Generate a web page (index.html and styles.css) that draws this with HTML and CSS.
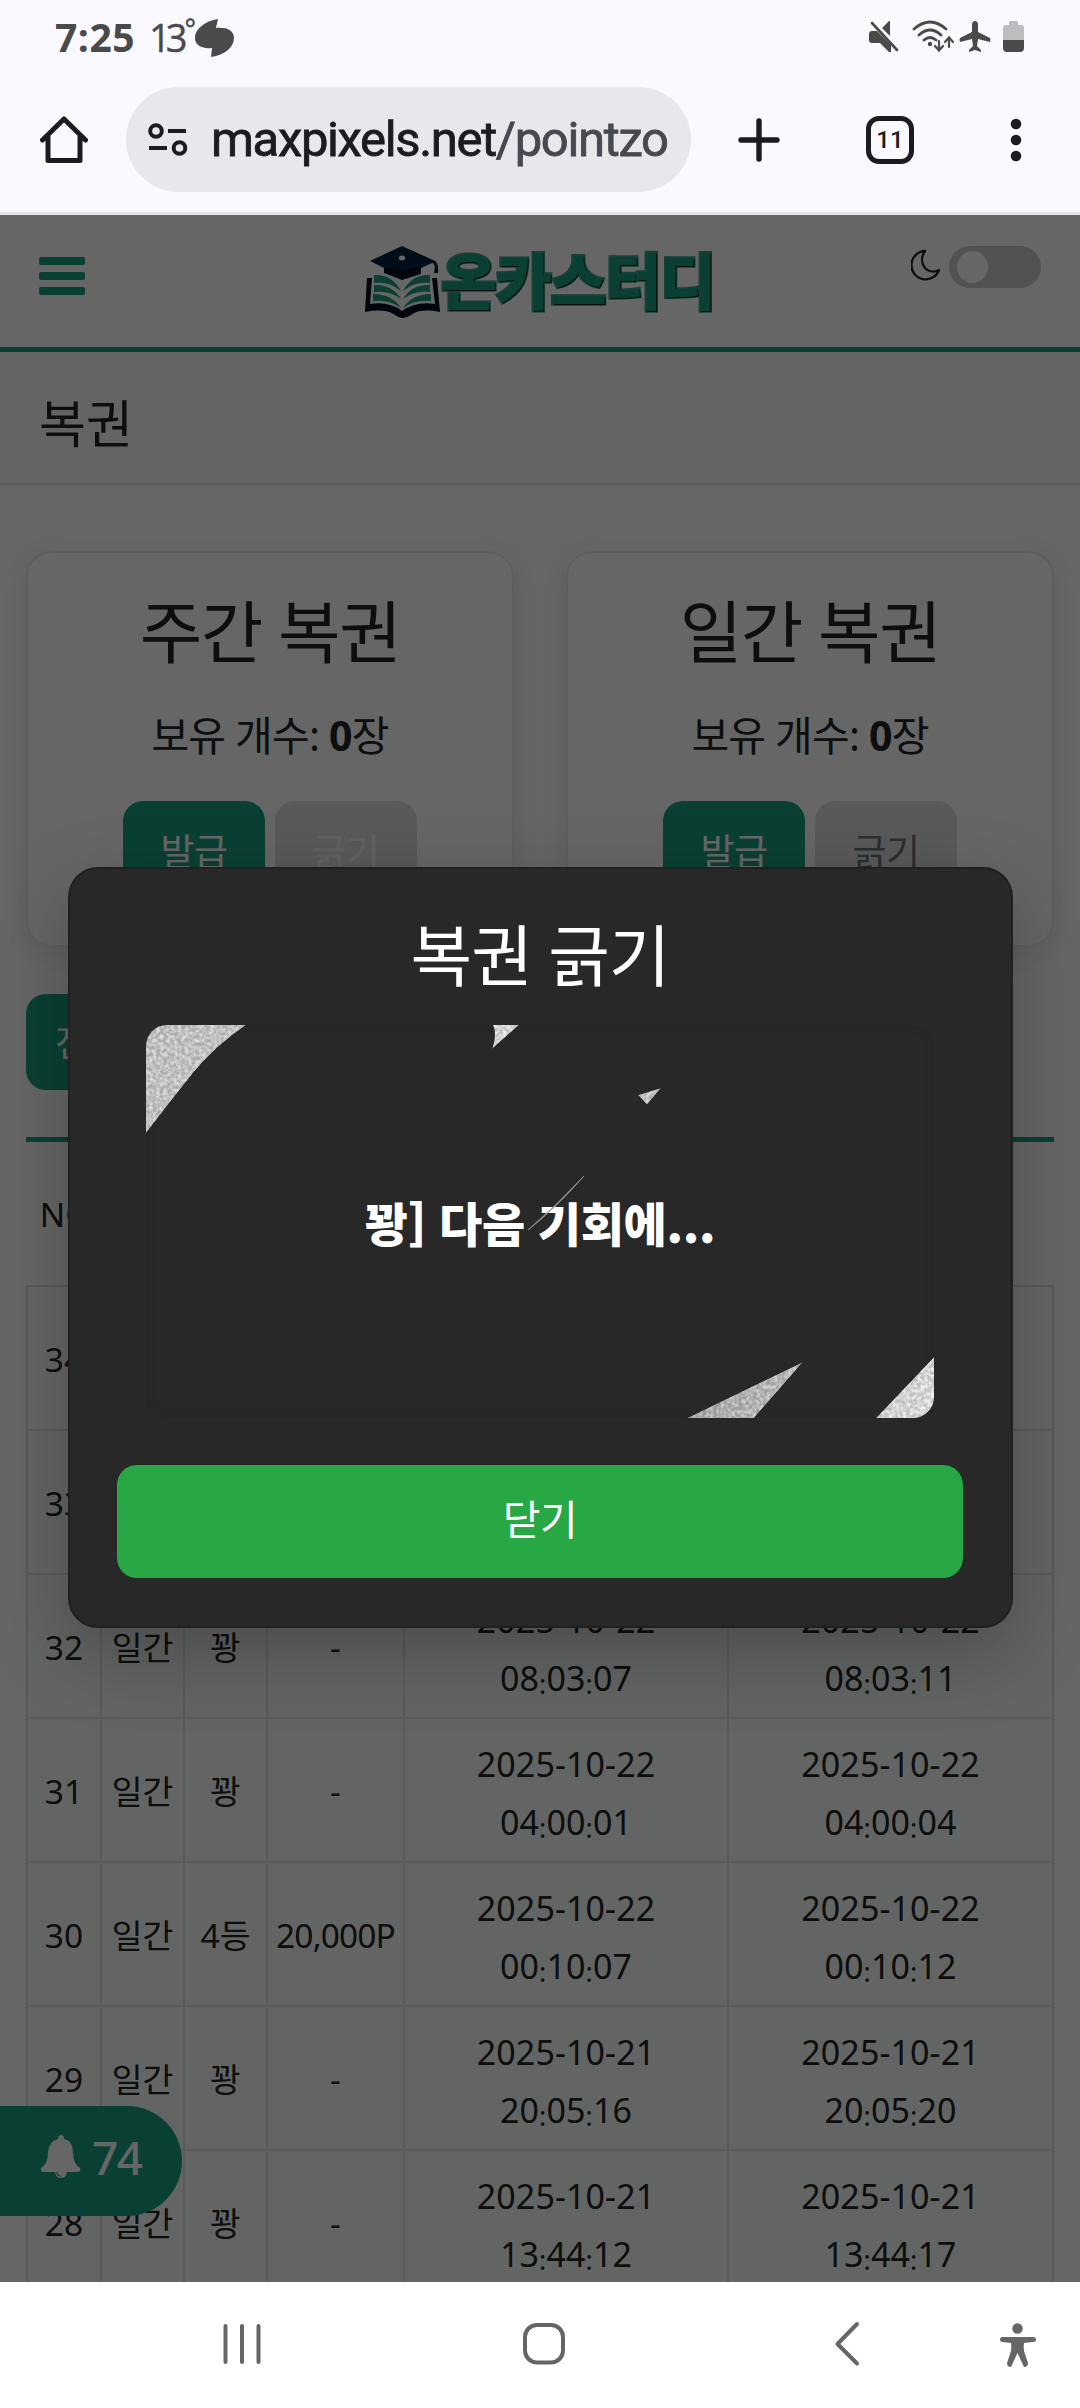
FILE: index.html
```html
<!DOCTYPE html>
<html lang="ko">
<head>
<meta charset="utf-8">
<title>복권</title>
<link rel="stylesheet" href="styles.css">
</head>
<body>
<div class="phone">
  <div class="status">
    <span class="clock">7:25</span>
    <span class="temp">13<i>°</i></span>
    <svg class="weather" width="40" height="38" viewBox="0 0 40 38"><path fill="#4a4a4a" d="M23 0C10 2 0 10 0 19C0 27 8 30 17 29L16 38C30 36 39 28 39 19C39 11 31 8 21 9Z"/></svg>
    <svg class="sys" width="160" height="34" viewBox="0 0 160 34">
      <g fill="#4a4a4a" stroke-linecap="round">
        <path d="M0 14q0-3 3-3h5l14 14v7h-2l-9-9H3q-3 0-3-3zM13 8l7-7h1v15z"/>
        <path d="M3 3L28 30" stroke="#4a4a4a" stroke-width="2.6"/>
        <g fill="none" stroke="#4a4a4a" stroke-width="2.8"><path d="M45 9Q61-5 77 9M50 15Q61 5 72 15M55 20Q61 15 67 20"/><path stroke-width="2.2" d="M70 21v9m-4-4l4 4.500 4-4.500M80 27v-9m-4 4l4-4.500 4 4.500"/></g>
        <circle cx="61" cy="24" r="2.200"/>
        <path d="M106 1q3 0 3 4v7l12 6q1 1 0 4l-12-3-1 7 4 4v2l-6-2-6 2v-2l4-4-1-7-12 3q-1-3 0-4l12-6V5q0-4 3-4z"/>
      </g>
      <path fill="#bdbdbf" d="M134 20V8q0-3 3-3h3V2q0-1 2-1h5q2 0 2 1v3h3q3 0 3 3v12z"/>
      <path fill="#4a4a4a" d="M134 20h21v8q0 4-4 4h-13q-4 0-4-4z"/>
    </svg>
  </div>
  <div class="toolbar">
    <svg class="home" width="48" height="48" viewBox="0 0 48 48"><path fill="none" stroke="#1c1b20" stroke-width="5" stroke-linecap="round" stroke-linejoin="round" d="M2.500 24L24 3L45.500 24M8 20V44.500H40V20"/></svg>
    <div class="address">
      <svg width="40" height="34" viewBox="0 0 40 34"><g fill="none" stroke="#1c1b20" stroke-width="4"><circle cx="8" cy="8" r="5.800"/><circle cx="31.500" cy="25" r="5.800"/><path d="M20 8h18M1 25h18"/></g></svg>
      <div class="url"><b>maxpixels.net</b>/pointzone</div>
    </div>
    <svg class="plus" width="42" height="44" viewBox="0 0 42 44"><path stroke="#1c1b20" stroke-width="5.400" stroke-linecap="round" d="M21 3v38M3 22h36"/></svg>
    <div class="tabs">11</div>
    <svg class="dots" width="12" height="44" viewBox="0 0 12 44"><g fill="#1c1b20"><circle cx="6" cy="6" r="5.300"/><circle cx="6" cy="22" r="5.300"/><circle cx="6" cy="38" r="5.300"/></g></svg>
  </div>

  <div class="page">
    <header class="site-head">
      <div class="burger"><i></i><i></i><i></i></div>
      <div class="logo">
        <svg width="76" height="74" viewBox="0 0 76 74">
          <path fill="#010f1d" d="M2 32h5L5 58Q24 55 37 65Q51 55 70 58L67 32h5L75 66Q55 62 46 69Q37 75 30 69Q20 62 0 66Z"/>
          <g fill="#1f9b80"><path d="M9 29Q27 28 36 45Q24 35 9 37zM9 39Q27 38 36 53Q24 44 9 46zM8 48Q27 48 36 62Q24 53 8 55z"/><path d="M65 29Q47 28 38 45Q50 35 65 37zM65 39Q47 38 38 53Q50 44 65 46zM66 48Q47 48 38 62Q50 53 66 55z"/></g>
          <path fill="#02203a" d="M37 0L68 14Q74 15 73 27h-4Q71 17 67 17L56 22v6L37 34L19 27v-5L5 15Z"/>
          <path fill="#010f1d" d="M19 21L38 25L56 20V27Q44 27 37 34Q30 27 19 27Z"/>
          <ellipse cx="37" cy="12" rx="3.200" ry="2.500" fill="#fff"/>
        </svg>
        <span>온카스터디</span>
      </div>
      <div class="theme">
        <svg width="30" height="32" viewBox="0 0 30 32"><path fill="none" stroke="#222" stroke-width="2.300" stroke-linejoin="round" d="M14 2A14.200 14.200 0 1 0 28 21C16 27 6 14 14 2Z"/></svg>
        <div class="switch"></div>
      </div>
    </header>
    <h1 class="title">복권</h1>
    <div class="cards">
      <section class="card">
        <h2>주간 복권</h2>
        <p>보유 개수: <b>0</b>장</p>
        <div class="btns"><span class="btn">발급</span><span class="btn off">긁기</span></div>
      </section>
      <section class="card">
        <h2>일간 복권</h2>
        <p>보유 개수: <b>0</b>장</p>
        <div class="btns"><span class="btn">발급</span><span class="btn off dark">긁기</span></div>
      </section>
    </div>
    <div class="filter"><span class="btn">전체</span></div>
    <div class="tbl">
      <div class="row head"><span>NO</span><span></span><span></span><span></span><span></span><span></span></div>
      <div class="row plain"><span>34</span><span></span><span></span><span></span><span></span><span></span></div>
      <div class="row"><span>33</span><span></span><span></span><span></span><span></span><span></span></div>
      <div class="row"><span>32</span><span>일간</span><span>꽝</span><span>-</span><span>2025-10-22<br>08<i>:</i>03<i>:</i>07</span><span>2025-10-22<br>08<i>:</i>03<i>:</i>11</span></div>
      <div class="row"><span>31</span><span>일간</span><span>꽝</span><span>-</span><span>2025-10-22<br>04<i>:</i>00<i>:</i>01</span><span>2025-10-22<br>04<i>:</i>00<i>:</i>04</span></div>
      <div class="row"><span>30</span><span>일간</span><span>4등</span><span class="pts">20,000P</span><span>2025-10-22<br>00<i>:</i>10<i>:</i>07</span><span>2025-10-22<br>00<i>:</i>10<i>:</i>12</span></div>
      <div class="row"><span>29</span><span>일간</span><span>꽝</span><span>-</span><span>2025-10-21<br>20<i>:</i>05<i>:</i>16</span><span>2025-10-21<br>20<i>:</i>05<i>:</i>20</span></div>
      <div class="row"><span>28</span><span>일간</span><span>꽝</span><span>-</span><span>2025-10-21<br>13<i>:</i>44<i>:</i>12</span><span>2025-10-21<br>13<i>:</i>44<i>:</i>17</span></div>
    </div>
    <div class="alarm">
      <svg width="40" height="44" viewBox="0 0 40 44"><path fill="#fff" d="M20 0q3 0 3 4Q32 6 32 17Q32 29 39 33q1 4-2 4H26q-1 6-6 6t-6-6H2q-3 0-2-4Q7 29 7 17Q8 6 17 4q0-4 3-4z"/><path fill="none" stroke="#1ba082" stroke-width="1.200" d="M16 37q0 4 4 4"/></svg>
      <span>74</span>
    </div>
    <div class="overlay">
      <div class="modal">
        <h2>복권 긁기</h2>
        <div class="scratch">
          <span>꽝] 다음 기회에...</span>
          <svg width="788" height="393" viewBox="0 0 788 393">
            <defs>
              <filter id="grain" x="0" y="0" width="100%" height="100%" color-interpolation-filters="sRGB">
                <feTurbulence type="fractalNoise" baseFrequency="0.28" numOctaves="2" seed="4"/>
                <feColorMatrix values="0.45 0 0 0 -0.14  0.45 0 0 0 -0.14  0.45 0 0 0 -0.14  0 0 0 0 1" result="n"/>
                <feComposite in="SourceGraphic" in2="n" operator="arithmetic" k2="0.9" k3="1"/>
                <feComposite in2="SourceGraphic" operator="in"/>
              </filter>
              <linearGradient id="silver" gradientUnits="userSpaceOnUse" x1="0" y1="0" x2="788" y2="393"><stop offset="0" stop-color="#bdbdbd"/><stop offset=".12" stop-color="#c0c0c0"/><stop offset=".4" stop-color="#d4d4d4"/><stop offset=".75" stop-color="#a4a4a4"/><stop offset=".88" stop-color="#bcbcbc"/><stop offset="1" stop-color="#dcdcdc"/></linearGradient>
            </defs>
            <g fill="url(#silver)" filter="url(#grain)">
              <path d="M0 0H100Q68 22 47 48Q23 78 0 108Z"/>
              <path d="M347 0H373L346 24Q351 10 347 0Z"/>
              <path d="M492 70L515 63L501 79.500Z"/>
              <path d="M541 393L657 337L608 393Z"/>
              <path d="M730 393L788 332V393Z"/>
            </g>
            <path d="M438 151Q410 183 382 205Q412 179 438 151Z" fill="#aaa" stroke="#999" stroke-width=".8"/>
          </svg>
        </div>
        <div class="close">닫기</div>
      </div>
    </div>
  </div>

  <nav class="nav">
    <svg width="1080" height="126" viewBox="0 0 1080 126"><g fill="none" stroke="#666" stroke-width="4" stroke-linecap="round" stroke-linejoin="round">
      <path d="M225.500 44v36M242 44v36M258.500 44v36"/>
      <rect x="525" y="43" width="38" height="37.500" rx="12"/>
      <path d="M857 42L837.500 62L857 81.500"/></g>
      <g fill="#666"><circle cx="1017.500" cy="46.500" r="5.200"/><path d="M1002 55h31q3 0 3 2.500t-3 2.500l-9 1q-1 6 1 11l3 9q0 4-4 4l-6.500-14l-6.500 14q-4 0-4-4l3-9q2-5 1-11l-8-1q-3 0-3-2.500t2-2.500z"/></g>
    </svg>
  </nav>
</div>
</body>
</html>
```

FILE: styles.css
```css
* { box-sizing: border-box; }
body { margin: 0; font-family: "Noto Sans", "Noto Sans CJK KR", sans-serif; color: #242424; }
h1, h2, p { margin: 0; font-weight: 400; }
svg { display: block; flex: none; }
.phone { width: 1080px; height: 2408px; overflow: hidden; display: flex; flex-direction: column; background: #faf9ff; }

.status { height: 79px; display: flex; align-items: flex-start; padding: 19px 56px 0 55px; color: #4a4a4a; }
.clock { font: 700 39px/35px "Open Sans", sans-serif; width: 94px; letter-spacing: .5px; }
.temp { font: 400 38px/36px "Open Sans", sans-serif; width: 46px; letter-spacing: -5px; white-space: nowrap; -webkit-text-stroke: .4px currentColor; }
.temp i { font-style: normal; font-size: 27px; line-height: 1px; vertical-align: 13px; margin-left: 2px; }
.weather { margin-right: auto; }
.sys { margin-top: 1px; margin-right: -5px; }

.toolbar { height: 136px; display: flex; align-items: flex-start; padding: 8px 0 0 40px; border-bottom: 3px solid #e3e2e8; }
.home { margin: 29px 38px 0 0; }
.address { width: 565px; height: 105px; border-radius: 53px; background: #e8e7eb; display: flex; align-items: center; padding: 0 21px 0 22px; gap: 23px; }
.url { flex: 1; overflow: hidden; white-space: nowrap; font: 400 49px/70px Roboto, sans-serif; color: #464951; letter-spacing: -1.350px; -webkit-text-stroke: .8px currentColor; }
.url b { font-weight: 400; color: #1c1b20; }
.plus { margin: 31px 86px 0 47px; }
.tabs { width: 48px; height: 48px; margin: 29px 96px 0 0; border: 5px solid #1c1b20; border-radius: 13px; font: 500 24px/38px Roboto, sans-serif; color: #1c1b20; text-align: center; }
.dots { margin-top: 31px; }

.page { position: relative; height: 2067px; flex: none; overflow: hidden; background: #fff; }
.site-head { height: 137px; border-bottom: 5px solid #1ba082; display: flex; align-items: flex-start; justify-content: space-between; padding: 31px 39px 0; }
.burger { width: 46px; margin-top: 11px; display: grid; gap: 7px; }
.burger i { height: 8px; border-radius: 2px; background: #1ba082; }
.logo { display: flex; margin-left: 84px; }
.logo span { font: 900 61px/66px "Noto Sans CJK KR", sans-serif; letter-spacing: -1.300px; color: #1ba082; -webkit-text-stroke: 3.500px #3fa08c; paint-order: stroke fill; text-shadow: 1px 1px 0 #04291c; }
.theme { display: flex; gap: 8px; }
.theme svg { margin-top: 3px; }
.switch { width: 92px; height: 42px; border-radius: 21px; background: #ccc; padding: 5px 8px; }
.switch::before { content: ""; display: block; width: 31px; height: 32px; border-radius: 50%; background: #fff; }
.title { height: 133px; padding: 26px 39px 0; background: #fafafa; border-bottom: 2px solid #e0e3e6; font-size: 51px; line-height: 90px; }
.cards { display: grid; grid-template-columns: 488px 488px; gap: 52px; padding: 66px 26px 0; }
.card { height: 396px; border: 2px solid #ebebeb; border-radius: 26px; text-align: center; box-shadow: 0 5px 30px rgba(0,0,0,.1); padding-top: 34px; }
.card h2 { font-size: 68px; line-height: 90px; letter-spacing: -1.500px; }
.card p { font-size: 41px; line-height: 60px; margin-top: 28px; letter-spacing: -.8px; }
.btns { display: flex; justify-content: center; gap: 10px; margin-top: 36px; }
.btn { width: 142px; height: 96px; border-radius: 20px; background: #1ba082; color: #fff; font-size: 37px; line-height: 102px; text-align: center; flex: none; letter-spacing: -.5px; }
.off { background: #dfdfdf; color: #f2f2f2; }
.dark { color: #6d7379; }
.filter { display: flex; padding: 47px 26px 0; }
.filter .btn { line-height: 98px; text-align: left; padding-left: 29px; }
.tbl { margin: 47px 26px 0; border-top: 5px solid #1ba082; font-size: 33.500px; line-height: 58px; }
.row { display: grid; grid-template-columns: 76px 83px 83px 137px 324px 325px; height: 144px; border-bottom: 2px solid #e2e2e2; background: #f7fcfa; }
.row span { display: flex; flex-wrap: wrap; align-content: center; justify-content: center; border-right: 2px solid #e2e2e2; white-space: nowrap; padding-top: 1px; }
.row span:first-child { border-left: 2px solid #e2e2e2; }
.row span:nth-child(n+5) { display: block; text-align: center; padding-top: 8px; font-size: 34px; letter-spacing: .1px; }
.row .pts { letter-spacing: -.9px; }
.row i { font-style: normal; font-size: 27px; position: relative; top: 3px; }
.row.head, .row.plain { background: #fff; }
.row.head { height: 145px; }
.row.head span { border-color: transparent; padding-left: 3px; }
.alarm { position: absolute; left: 0; top: 1891px; width: 182px; height: 110px; border-radius: 0 55px 55px 0; background: #1ba082; color: #fff; display: flex; align-items: center; padding: 0 0 8px 41px; gap: 11px; font-size: 46px; font-weight: 500; letter-spacing: -1.500px; }

.overlay { position: absolute; inset: 0; background: rgba(0,0,0,.6); display: flex; flex-direction: column; align-items: center; justify-content: center; padding-bottom: 2px; }
.modal { width: 945px; height: 761px; border-radius: 30px; border: 2px solid #202020; background: #282828; color: #fff; box-shadow: 0 25px 75px rgba(0,0,0,.25); display: flex; flex-direction: column; align-items: center; padding-top: 41px; }
.modal h2 { font-size: 67px; line-height: 90px; letter-spacing: -1px; }
.scratch { position: relative; width: 788px; height: 393px; margin-top: 25px; border-radius: 21px; overflow: hidden; box-shadow: inset 0 0 12px rgba(0,0,0,.08); display: flex; align-items: center; justify-content: center; }
.scratch span { font: 900 47px/60px "Noto Sans CJK KR", sans-serif; letter-spacing: -.3px; white-space: nowrap; }
.scratch svg { position: absolute; inset: 0; }
.close { width: 846px; height: 113px; margin-top: 47px; border-radius: 20px; background: #28a745; text-align: center; font-size: 41px; line-height: 109px; letter-spacing: -.5px; }
.nav { height: 126px; flex: none; background: #fff; }
```
